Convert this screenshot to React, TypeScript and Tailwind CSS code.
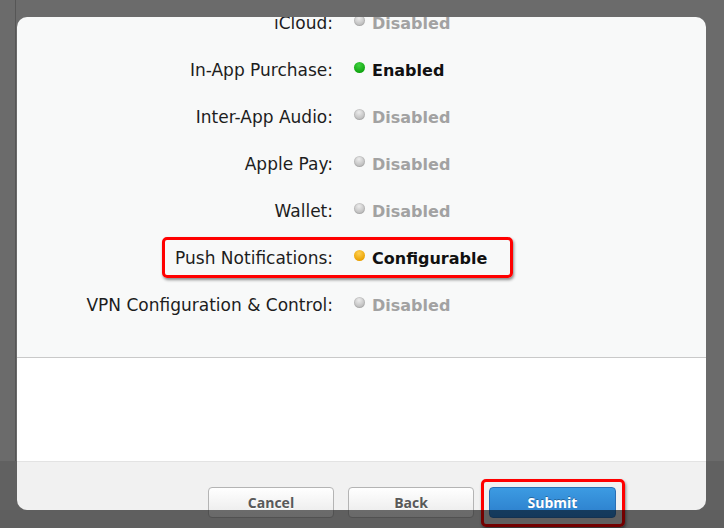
import React from 'react'

type Status = 'disabled' | 'enabled' | 'configurable'

interface Capability {
    label: string;
    status: Status;
    highlight?: boolean;
}

const capabilities: Capability[] = [
    { label: 'iCloud:', status: 'disabled' },
    { label: 'In-App Purchase:', status: 'enabled' },
    { label: 'Inter-App Audio:', status: 'disabled' },
    { label: 'Apple Pay:', status: 'disabled' },
    { label: 'Wallet:', status: 'disabled' },
    { label: 'Push Notifications:', status: 'configurable', highlight: true },
    { label: 'VPN Configuration & Control:', status: 'disabled' },
]

const dotClass: Record<Status, string> = {
    disabled: 'bg-[radial-gradient(circle_at_45%_30%,#ececec,#b9b9b9_75%)] shadow-[inset_0_0_0_1px_rgba(0,0,0,0.08)]',
    enabled: 'bg-[radial-gradient(circle_at_45%_30%,#3fd23f,#0fa30f_75%)]',
    configurable: 'bg-[radial-gradient(circle_at_45%_30%,#ffd050,#e9a000_75%)]',
}

const statusText: Record<Status, string> = {
    disabled: 'Disabled',
    enabled: 'Enabled',
    configurable: 'Configurable',
}

const CapabilityRow: React.FC<{ item: Capability }> = ({ item }) => {
    const active = item.status !== 'disabled'
    return (
        <div className="relative h-[47px] leading-[47px] whitespace-nowrap">
            <span className="inline-block w-[316px] text-right text-[17px] text-[#1d1d1d]">{item.label}</span>
            <span className={`inline-block w-[11px] h-[11px] rounded-full ml-[21px] align-[3px] ${dotClass[item.status]}`} />
            <span className={`ml-[7px] text-[16px] font-bold ${active ? 'text-[#111]' : 'text-[#a2a2a2]'}`}>
                {statusText[item.status]}
            </span>

            {/* annotation */}
            {item.highlight && (
                <div className="absolute left-[145px] top-[2px] w-[351px] h-[41px] border-[3px] border-[#ff0000] rounded-[5px] shadow-[1px_2px_3px_rgba(0,0,0,0.45)]" />
            )}
        </div>
    )
}

export default function App() {
    return (
        <div
            className="relative w-[724px] h-[528px] overflow-hidden pt-[17px] pl-[17px] bg-[linear-gradient(to_bottom,#6b6b6b_461px,#616161_461px,#616161_510px,#d2d2d2_510px)]"
            style={{ fontFamily: '"DejaVu Sans", Verdana, sans-serif' }}
        >
            <div className="absolute left-[15px] top-0 w-px h-[461px] bg-[#565656]" />

            <div className="relative w-[689px] flex flex-col">
                {/* Scrolled capability list */}
                <div className="h-[341px] bg-[#f8f9f9] border-b border-[#c9c9c9] rounded-t-[10px] overflow-hidden">
                    <div className="-mt-[17px]">
                        {capabilities.map((c) => (
                            <CapabilityRow key={c.label} item={c} />
                        ))}
                    </div>
                </div>

                <div className="h-[103px] bg-white" />

                {/* Footer */}
                <div
                    className="h-[49px] bg-[#f1f1f1] border-t border-[#e3e3e3] rounded-b-[10px] flex justify-end items-start pt-[25px] pr-[90px]"
                    style={{ fontFamily: '"Open Sans", sans-serif' }}
                >
                    <button className="w-[126px] h-[31px] mr-[14px] rounded-[4px] border border-[#b4b4b4] bg-[linear-gradient(to_bottom,#ffffff,#e9e9e9)] text-[14px] font-bold text-[#595959] [text-shadow:0_1px_0_#fff]">
                        Cancel
                    </button>
                    <button className="w-[126px] h-[31px] mr-[15px] rounded-[4px] border border-[#b4b4b4] bg-[linear-gradient(to_bottom,#ffffff,#e9e9e9)] text-[14px] font-bold text-[#595959] [text-shadow:0_1px_0_#fff]">
                        Back
                    </button>
                    <div className="relative">
                        <button className="w-[127px] h-[31px] rounded-[4px] border border-[#2a6fb4] bg-[linear-gradient(to_bottom,#3c9be2,#2b7dcb)] text-[14px] font-bold text-white [text-shadow:0_-1px_0_rgba(0,0,0,0.3)]">
                            Submit
                        </button>
                        <div className="absolute -left-[8px] -top-[8px] w-[144px] h-[48px] border-[3px] border-[#ff0000] rounded-[5px] shadow-[1px_2px_3px_rgba(0,0,0,0.45)]" />
                    </div>
                </div>
            </div>

            {/* dimmed strip at the bottom edge */}
            <div className="absolute left-0 top-[510px] w-full h-[18px] bg-black/55 z-10" />
        </div>
    )
}
